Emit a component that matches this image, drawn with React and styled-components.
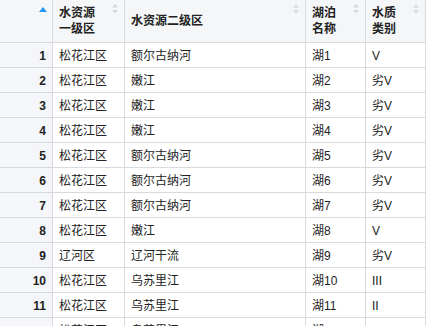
import React from "react";
import styled, { createGlobalStyle } from "styled-components";

const GlobalStyle = createGlobalStyle`
  html, body {
    margin: 0;
    padding: 0;
    background: #ffffff;
  }
  body {
    font-family: "Liberation Sans", "Noto Sans CJK SC", sans-serif;
    font-size: 12px;
    color: #222;
  }
`;

const Table = styled.table`
  table-layout: fixed;
  border-collapse: separate;
  border-spacing: 0;
  width: 426px;
`;

const Col = styled.col`
  width: ${(p) => p.$w}px;
`;

const Head = styled.th`
  box-sizing: border-box;
  position: relative;
  background: #f5f6f8;
  border-right: 1px solid #d9dadd;
  border-bottom: 1px solid #d9dadd;
  padding: 5px 14px 5px 6px;
  line-height: 16px;
  font-weight: bold;
  text-align: left;
  vertical-align: middle;
  height: 43px;
`;

const Cell = styled.td`
  box-sizing: border-box;
  background: ${(p) => (p.$index ? "#f4f6f9" : "#ffffff")};
  border-right: 1px solid #d9dadd;
  border-bottom: 1px solid #d9dadd;
  padding: 5px 6px 3px;
  line-height: 16px;
  height: 25px;
  text-align: ${(p) => (p.$index ? "right" : "left")};
  font-weight: ${(p) => (p.$index ? "bold" : "normal")};
  white-space: nowrap;
  overflow: hidden;
`;

const SortIcon = styled.svg`
  position: absolute;
  top: 4px;
  right: 6px;
`;

const SortedIcon = styled.svg`
  position: absolute;
  top: 7px;
  right: 5px;
`;

const widths = [53, 72, 181, 60, 60];

const columns = [
  { key: "zone1", label: ["水资源", "一级区"] },
  { key: "zone2", label: ["水资源二级区"] },
  { key: "lake", label: ["湖泊", "名称"] },
  { key: "grade", label: ["水质", "类别"] },
];

const rows = [
  ["松花江区", "额尔古纳河", "湖1", "V"],
  ["松花江区", "嫩江", "湖2", "劣V"],
  ["松花江区", "嫩江", "湖3", "劣V"],
  ["松花江区", "嫩江", "湖4", "劣V"],
  ["松花江区", "额尔古纳河", "湖5", "劣V"],
  ["松花江区", "额尔古纳河", "湖6", "劣V"],
  ["松花江区", "额尔古纳河", "湖7", "劣V"],
  ["松花江区", "嫩江", "湖8", "V"],
  ["辽河区", "辽河干流", "湖9", "劣V"],
  ["松花江区", "乌苏里江", "湖10", "III"],
  ["松花江区", "乌苏里江", "湖11", "II"],
  ["松花江区", "乌苏里江", "湖12", "III"],
];

const Arrows = () => (
  <SortIcon width="6" height="10" viewBox="0 0 6 10">
    <path d="M3 0 L6 3.5 L0 3.5 Z" fill="#d6d8dc" />
    <path d="M0 6 L6 6 L3 9.5 Z" fill="#d6d8dc" />
  </SortIcon>
);

const App = () => (
  <>
    <GlobalStyle />
    <Table>
      <colgroup>
        {widths.map((w, i) => (
          <Col key={i} $w={w} />
        ))}
      </colgroup>
      <thead>
        <tr>
          <Head>
            <SortedIcon width="8" height="5" viewBox="0 0 8 5">
              <path d="M4 0 L8 5 L0 5 Z" fill="#2196f3" />
            </SortedIcon>
          </Head>
          {columns.map((c) => (
            <Head key={c.key}>
              {c.label.map((line, i) => (
                <React.Fragment key={i}>
                  {i > 0 && <br />}
                  {line}
                </React.Fragment>
              ))}
              <Arrows />
            </Head>
          ))}
        </tr>
      </thead>
      <tbody>
        {rows.map((r, i) => (
          <tr key={i}>
            <Cell $index>{i + 1}</Cell>
            {r.map((v, j) => (
              <Cell key={j}>{v}</Cell>
            ))}
          </tr>
        ))}
      </tbody>
    </Table>
  </>
);

export default App;
